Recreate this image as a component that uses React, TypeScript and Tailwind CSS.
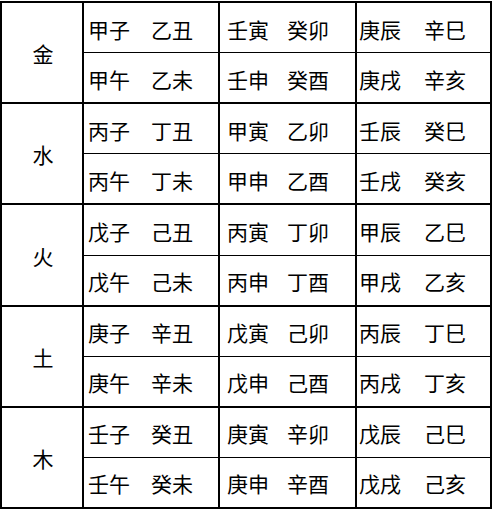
import React from 'react';

type Group = {
  element: string;
  rows: [string, string][][];
};

const groups: Group[] = [
  {
    element: '金',
    rows: [
      [['甲子', '乙丑'], ['壬寅', '癸卯'], ['庚辰', '辛巳']],
      [['甲午', '乙未'], ['壬申', '癸酉'], ['庚戌', '辛亥']],
    ],
  },
  {
    element: '水',
    rows: [
      [['丙子', '丁丑'], ['甲寅', '乙卯'], ['壬辰', '癸巳']],
      [['丙午', '丁未'], ['甲申', '乙酉'], ['壬戌', '癸亥']],
    ],
  },
  {
    element: '火',
    rows: [
      [['戊子', '己丑'], ['丙寅', '丁卯'], ['甲辰', '乙巳']],
      [['戊午', '己未'], ['丙申', '丁酉'], ['甲戌', '乙亥']],
    ],
  },
  {
    element: '土',
    rows: [
      [['庚子', '辛丑'], ['戊寅', '己卯'], ['丙辰', '丁巳']],
      [['庚午', '辛未'], ['戊申', '己酉'], ['丙戌', '丁亥']],
    ],
  },
  {
    element: '木',
    rows: [
      [['壬子', '癸丑'], ['庚寅', '辛卯'], ['戊辰', '己巳']],
      [['壬午', '癸未'], ['庚申', '辛酉'], ['戊戌', '己亥']],
    ],
  },
];

// per-column widths, left padding and gap between the two pairs
const cellClasses = [
  'w-[136px] border-r-2 border-black pl-[4px]',
  'w-[137px] border-r-2 border-black pl-[7px]',
  'flex-1 pl-[2px]',
];
const gapClasses = ['ml-[21px]', 'ml-[18px]', 'ml-[23px]'];

const Row: React.FC<{ cells: [string, string][]; last: boolean }> = ({ cells, last }) => (
  <div className={`flex flex-1 ${last ? '' : 'border-b border-black'}`}>
    {cells.map((pair, i) => (
      <div key={i} className={`flex items-center pt-[3px] ${cellClasses[i]}`}>
        <span>{pair[0]}</span>
        <span className={gapClasses[i]}>{pair[1]}</span>
      </div>
    ))}
  </div>
);

export default function App() {
  return (
    <div className="w-[492px] h-[511px] bg-white">
      <div
        className="mt-px w-[492px] h-[508px] border-2 border-black flex flex-col text-black text-[21px] leading-none"
        style={{ fontFamily: '"Noto Sans CJK SC", "Noto Sans CJK JP", sans-serif' }}
      >
        {groups.map((g, gi) => (
          <div
            key={g.element}
            className={`flex flex-1 ${gi < groups.length - 1 ? 'border-b-2 border-black' : ''}`}
          >
            <div className="w-[82px] border-r-2 border-black flex items-center justify-center pl-[2px] pt-[2px]">
              {g.element}
            </div>
            <div className="flex flex-col flex-1">
              {g.rows.map((r, ri) => (
                <Row key={ri} cells={r} last={ri === g.rows.length - 1} />
              ))}
            </div>
          </div>
        ))}
      </div>
    </div>
  );
}
